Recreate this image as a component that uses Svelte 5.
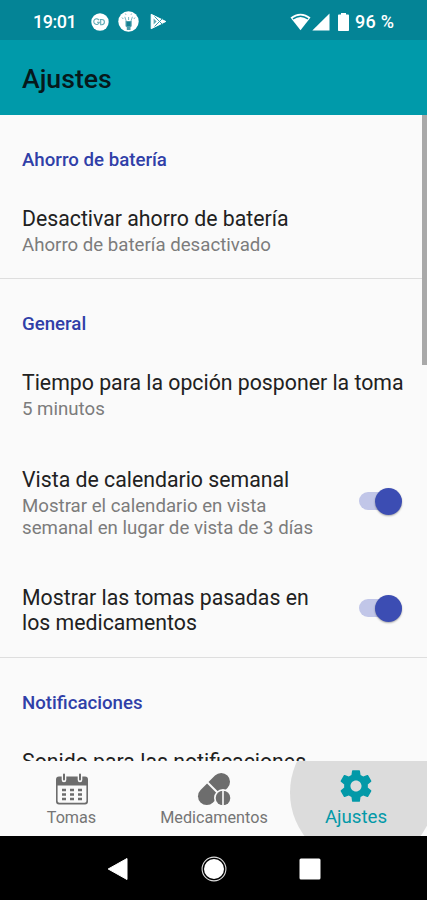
<script lang="ts">
  interface Item {
    title: string;
    summary?: string;
    checked?: boolean;
  }
  interface Section {
    name: string;
    items: Item[];
  }

  let sections = $state<Section[]>([
    {
      name: 'Ahorro de batería',
      items: [{ title: 'Desactivar ahorro de batería', summary: 'Ahorro de batería desactivado' }],
    },
    {
      name: 'General',
      items: [
        { title: 'Tiempo para la opción posponer la toma', summary: '5 minutos' },
        {
          title: 'Vista de calendario semanal',
          summary: 'Mostrar el calendario en vista semanal en lugar de vista de 3 días',
          checked: true,
        },
        { title: 'Mostrar las tomas pasadas en los medicamentos', checked: true },
      ],
    },
    {
      name: 'Notificaciones',
      items: [{ title: 'Sonido para las notificaciones' }],
    },
  ]);
</script>

<div class="screen">
  <div class="status">
    <span class="clock">19:01</span>
    <svg class="badge" width="18" height="18" viewBox="0 0 18 18">
      <circle cx="9" cy="9" r="8.7" fill="#fff" />
      <g fill="none" stroke="#5faab5" stroke-width="1.1">
        <path d="M8 7.2A2.8 2.8 0 1 0 8.3 9.3H6" />
        <path d="M9.7 6.5v5.2h1.1a2.6 2.6 0 0 0 0-5.2H8.8" />
      </g>
    </svg>
    <svg class="bulb" width="21" height="21" viewBox="0 0 21 21">
      <circle cx="10.5" cy="10.5" r="10.2" fill="#fff" />
      <path d="M7.5 10h6.2v5.2l-1.2 1V19H8.8v-2.8l-1.3-1z" fill="#4b9dac" />
      <path d="M8.7 11h3.8v4H8.7z" fill="#137f91" />
      <path d="M8.2 10 6.8 5.8M13 10l1.4-4.2M10.6 9V6M5.3 8 4 6.5M15.9 8 17 6.5M8 3.8 7.4 2.6M13 3.8l.6-1.2" fill="none" stroke="#79b8c2" stroke-width="1" />
    </svg>
    <svg class="play" width="17" height="17" viewBox="0 0 17 17">
      <path d="M1.2 1.3 15.8 8.5 1.2 15.7z" fill="#fff" stroke="#fff" stroke-linejoin="round" />
      <path d="m4.5 3.5 8 8M4.5 13.5l8-8" fill="none" stroke="#3a9cab" stroke-width="1" />
      <path d="M3.6 5.5v6L6.6 8.5z" fill="#5faab5" />
    </svg>
    <svg class="wifi" width="21" height="18" viewBox="0 0 21 18">
      <path d="M.5 4.5C6.2-.6 14.8-.6 20.5 4.5L10.5 17.3z" fill="#fff" />
      <path d="M3 5.9c4.6-3.3 10.4-3.3 15 0" fill="none" stroke="#048496" stroke-width="1.5" />
    </svg>
    <svg class="cell" width="18" height="18" viewBox="0 0 18 18">
      <path d="M17.5.5v17H.3z" fill="#fff" />
    </svg>
    <svg class="battery" width="11" height="18" viewBox="0 0 11 18">
      <path d="M3 0h5v1.6h2.2q.8 0 .8.8v14.8q0 .8-.8.8H.8q-.8 0-.8-.8V2.4q0-.8.8-.8H3z" fill="#fff" />
    </svg>
    <span class="percent">96 %</span>
  </div>

  <header><h1>Ajustes</h1></header>

  <main>
    {#each sections as section (section.name)}
      <section>
        <h2>{section.name}</h2>
        {#each section.items as item (item.title)}
          <div class="item">
            <div class="text" class:wide={item.checked === undefined}>
              <div class="title">{item.title}</div>
              {#if item.summary}
                <div class="summary">{item.summary}</div>
              {/if}
            </div>
            {#if item.checked !== undefined}
              <button
                type="button"
                class="switch"
                class:on={item.checked}
                role="switch"
                aria-checked={item.checked}
                aria-label={item.title}
                onclick={() => (item.checked = !item.checked)}
              ><span class="thumb"></span></button>
            {/if}
          </div>
        {/each}
      </section>
    {/each}
    <div class="scrollbar"></div>
  </main>

  <nav class="tabs">
    <div class="tab">
      <svg width="34" height="34" viewBox="0 0 34 34">
        <path d="M4 4.5h26a3 3 0 0 1 3 3v22a3 3 0 0 1-3 3H4a3 3 0 0 1-3-3v-22a3 3 0 0 1 3-3zM2.6 13.5V29q0 1.8 1.8 1.8h25.2q1.8 0 1.8-1.8V13.5z" fill="#6d6d6d" fill-rule="evenodd" />
        <path d="M9 3v5M25 3v5" stroke="#fafafa" stroke-width="4.6" stroke-linecap="round" />
        <path d="M9 2.5v5M25 2.5v5" stroke="#6d6d6d" stroke-width="2" stroke-linecap="round" />
        <path d="M7 18h20M7 22.5h20M7 27h20" stroke="#6d6d6d" stroke-width="2.6" stroke-dasharray="4 4" />
      </svg>
      <span>Tomas</span>
    </div>
    <div class="tab">
      <svg width="34" height="34" viewBox="0 0 34 34">
        <g transform="rotate(45 17 17)" fill="#6d6d6d">
          <path d="M8.2 16V6.8a8.8 8.8 0 0 1 17.6 0V16z" />
          <path d="M8.2 18h17.6v9.2a8.8 8.8 0 0 1-17.6 0z" />
        </g>
        <circle cx="26" cy="26" r="9" fill="#fafafa" />
        <circle cx="26" cy="26" r="7.3" fill="#6d6d6d" />
        <path d="M26 18v16" stroke="#fafafa" stroke-width="1.6" />
      </svg>
      <span>Medicamentos</span>
    </div>
    <div class="tab active">
      <svg width="38" height="38" viewBox="0 0 24 24">
        <path d="M19.43 12.98c.04-.32.07-.64.07-.98s-.03-.66-.07-.98l2.11-1.65c.19-.15.24-.42.12-.64l-2-3.46c-.12-.22-.39-.3-.61-.22l-2.49 1c-.52-.4-1.08-.73-1.69-.98l-.38-2.65C14.46 2.18 14.25 2 14 2h-4c-.25 0-.46.18-.49.42l-.38 2.65c-.61.25-1.17.59-1.69.98l-2.49-1c-.23-.09-.49 0-.61.22l-2 3.46c-.13.22-.07.49.12.64l2.11 1.65c-.04.32-.07.65-.07.98s.03.66.07.98l-2.11 1.65c-.19.15-.24.42-.12.64l2 3.46c.12.22.39.3.61.22l2.49-1c.52.4 1.08.73 1.69.98l.38 2.65c.03.24.24.42.49.42h4c.25 0 .46-.18.49-.42l.38-2.65c.61-.25 1.17-.59 1.69-.98l2.49 1c.23.09.49 0 .61-.22l2-3.46c.12-.22.07-.49-.12-.64l-2.11-1.65zM12 15.5c-1.93 0-3.5-1.57-3.5-3.5s1.57-3.5 3.5-3.5 3.5 1.57 3.5 3.5-1.57 3.5-3.5 3.5z" fill="#0299a8" />
      </svg>
      <span>Ajustes</span>
    </div>
  </nav>

  <div class="system">
    <svg width="22" height="24" viewBox="0 0 22 24">
      <path d="M20 1.5v21L1.2 12z" fill="#fff" stroke="#fff" stroke-linejoin="round" />
    </svg>
    <svg width="26" height="26" viewBox="0 0 26 26">
      <circle cx="13" cy="13" r="11.9" fill="none" stroke="#ddd" stroke-width="1.1" />
      <circle cx="13" cy="13" r="10" fill="#fff" />
    </svg>
    <svg width="22" height="22" viewBox="0 0 22 22">
      <rect x=".5" y=".5" width="21" height="21" rx="1.5" fill="#fff" />
    </svg>
  </div>
</div>

<style>
  :global(body) { margin: 0; }
  .screen {
    width: 427px;
    height: 900px;
    display: flex;
    flex-direction: column;
    overflow: hidden;
    background: #fafafa;
    font-family: Roboto, sans-serif;
  }
  .status {
    height: 40px;
    flex-shrink: 0;
    box-sizing: border-box;
    padding: 3px 31px 0 33px;
    display: flex;
    align-items: center;
    background: #048496;
    color: #fff;
    font-size: 18px;
    font-weight: 500;
    white-space: nowrap;
  }
  .clock { width: 43px; letter-spacing: -0.5px; }
  .badge { margin-left: 15px; }
  .bulb { margin-left: 9px; }
  .play { margin-left: 11px; }
  .wifi { margin-left: auto; }
  .cell { margin-left: 1px; }
  .battery { margin-left: 8px; }
  .percent { width: 41px; margin-left: 6px; letter-spacing: 0.3px; }
  header {
    height: 75px;
    flex-shrink: 0;
    box-sizing: border-box;
    padding: 3px 22px 0;
    display: flex;
    align-items: center;
    background: #009aaa;
  }
  h1 { margin: 0; font-size: 26.67px; font-weight: 500; color: #06191b; }
  main {
    position: relative;
    flex: 1;
    min-height: 0;
    overflow: hidden;
  }
  section { border-bottom: 1px solid #dedede; }
  h2 {
    margin: 0;
    padding: 34px 22px 12px;
    font-size: 18.67px;
    line-height: 22px;
    font-weight: 500;
    color: #303fa8;
  }
  .item {
    display: flex;
    align-items: center;
    justify-content: space-between;
    padding: 23px 25px 23.5px 22px;
  }
  .item:last-child { padding-bottom: 22px; }
  .text { max-width: 300px; }
  .wide { max-width: none; white-space: nowrap; }
  .title { font-size: 21.27px; line-height: 25px; color: #212121; }
  .summary { margin-top: 3px; font-size: 18.67px; line-height: 22px; color: #7c7c7c; }
  .switch {
    width: 43px;
    height: 27px;
    margin-bottom: 3px;
    padding: 0;
    border: none;
    position: relative;
    display: flex;
    align-items: center;
    flex-shrink: 0;
    background: none;
  }
  .switch::before {
    content: '';
    position: absolute;
    inset: 4px 0 5px;
    border-radius: 9px;
    background: #c8c8c8;
  }
  .switch.on { justify-content: flex-end; }
  .switch.on::before { background: #c1c6e8; }
  .thumb {
    position: relative;
    width: 27px;
    height: 27px;
    border-radius: 50%;
    background: #fff;
    box-shadow: 0 1px 2px #0005;
  }
  .on .thumb { background: #3c4db3; }
  .scrollbar {
    position: absolute;
    top: 0;
    right: 0;
    width: 5px;
    height: 250px;
    background: #a9a9a9;
  }
  .tabs {
    height: 75px;
    flex-shrink: 0;
    display: grid;
    grid-template-columns: 143px 142px 142px;
    overflow: hidden;
    background: #fafafa;
    color: #757575;
    font-size: 16.2px;
    line-height: 22px;
  }
  .tab {
    position: relative;
    padding-top: 11px;
    display: flex;
    flex-direction: column;
    align-items: center;
    gap: 1px;
  }
  .active { padding-top: 6px; color: #0299a8; font-size: 18.67px; }
  .active svg, .active span { position: relative; }
  /* touch ripple, clipped by the bar */
  .active::before {
    content: '';
    position: absolute;
    top: -41px;
    left: 5px;
    width: 145px;
    height: 145px;
    border-radius: 50%;
    background: #dcdcdc;
  }
  .system {
    height: 64px;
    flex-shrink: 0;
    display: flex;
    align-items: center;
    justify-content: center;
    gap: 72px;
    padding-top: 1px;
    box-sizing: border-box;
    background: #000;
  }
</style>
